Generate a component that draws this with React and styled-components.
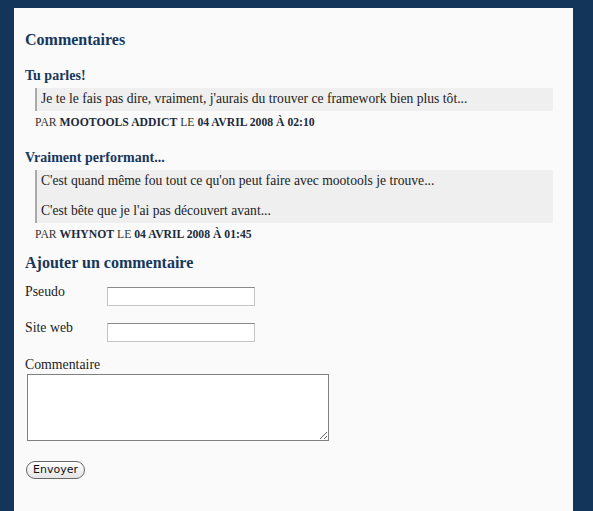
import React from "react";
import styled, { createGlobalStyle } from "styled-components";

const GlobalStyle = createGlobalStyle`
    html, body{
        margin: 0;
        padding: 0;
        background: #14355a;
        height: 100%;
    }
    #root{
        height: 100%;
    }
`;

const comments = [
    {
        title: "Tu parles!",
        paragraphs: ["Je te le fais pas dire, vraiment, j'aurais du trouver ce framework bien plus tôt..."],
        author: "Mootools addict",
        date: "04 avril 2008 à 02:10",
    },
    {
        title: "Vraiment performant...",
        paragraphs: [
            "C'est quand même fou tout ce qu'on peut faire avec mootools je trouve...",
            "C'est bête que je l'ai pas découvert avant...",
        ],
        author: "whynot",
        date: "04 avril 2008 à 01:45",
    },
];

function App(){
    return(
        <>
            <GlobalStyle />
            <Page>
                <Panel>
                    <Heading>Commentaires</Heading>
                    {comments.map((c) => (
                        <Comment key={c.title}>
                            <CommentTitle>{c.title}</CommentTitle>
                            <Quote>
                                {c.paragraphs.map((p) => <p key={p}>{p}</p>)}
                            </Quote>
                            <Meta>
                                par <strong>{c.author}</strong> le <strong>{c.date}</strong>
                            </Meta>
                        </Comment>
                    ))}
                    <FormHeading>Ajouter un commentaire</FormHeading>
                    <Form onSubmit={(e) => e.preventDefault()}>
                        <Field>
                            <FieldLabel>Pseudo</FieldLabel>
                            <TextInput type="text" />
                        </Field>
                        <Field>
                            <FieldLabel>Site web</FieldLabel>
                            <TextInput type="text" />
                        </Field>
                        <Block>
                            <Label>Commentaire</Label>
                            <TextArea />
                        </Block>
                        <Button type="submit">Envoyer</Button>
                    </Form>
                </Panel>
            </Page>
        </>
    )
}

const Page = styled.div`
    height: 100%;
    padding: 8px 20px 0 14px;
    box-sizing: border-box;
    overflow: hidden;
`;

const Panel = styled.div`
    width: 559px;
    min-height: 100%;
    box-sizing: border-box;
    background: #fafafa;
    padding: 22px 20px 30px 11px;
    font-family: "Liberation Serif", serif;
    font-size: 13.6px;
    color: #222;
`;

const Heading = styled.h2`
    margin: 0 0 18px 0;
    font-size: 16px;
    font-weight: bold;
    color: #17375c;
    line-height: 20px;
`;

const Comment = styled.div`
    margin-bottom: 19px;
`;

const CommentTitle = styled.h3`
    margin: 0 0 4px 0;
    font-size: 14px;
    font-weight: bold;
    color: #17375c;
    line-height: 16px;
`;

const Quote = styled.blockquote`
    margin: 0 0 0 10px;
    padding: 3px 6px 4px 4px;
    background: #efefef;
    border-left: 2px solid #aaa;
    p{
        margin: 0;
        line-height: 16px;
        & + p{
            margin-top: 14px;
        }
    }
`;

const Meta = styled.div`
    margin: 4px 0 0 10px;
    font-size: 11.7px;
    text-transform: uppercase;
    color: #333;
    line-height: 16px;
    strong{
        color: #1c2a3a;
    }
`;

const FormHeading = styled(Heading)`
    margin: -9px 0 14px 0;
`;

const Form = styled.form`
    display: flex;
    flex-direction: column;
    gap: 17px;
`;

const Field = styled.div`
    display: flex;
    align-items: flex-start;
    height: 19px;
`;

const Label = styled.label`
    width: 82px;
    line-height: 14px;
    flex-shrink: 0;
    font-size: 13.8px;
`;

const FieldLabel = styled(Label)`
    margin-top: -2px;
`;

const TextInput = styled.input`
    width: 148px;
    height: 19px;
    box-sizing: border-box;
    margin: 0;
    border: 1px solid #c4c4c4;
    border-top-color: #8a8a8a;
    background: #fff;
    padding: 1px 3px;
    font-family: "Liberation Sans", sans-serif;
    font-size: 12px;
`;

const Block = styled.div`
    display: flex;
    flex-direction: column;
    gap: 2px;
    margin-top: -1px;
`;

const TextArea = styled.textarea`
    width: 302px;
    height: 67px;
    box-sizing: border-box;
    margin: 0 0 0 2px;
    border: 1px solid #808080;
    background: #fff;
    font-family: "Liberation Sans", sans-serif;
    font-size: 12px;
    display: block;
`;

const Button = styled.button`
    align-self: flex-start;
    margin: 3px 0 0 1px;
    width: 59px;
    height: 18px;
    padding: 0;
    border: 1px solid #666;
    border-radius: 9px;
    background: linear-gradient(#ffffff, #f2f2f2 50%, #e4e4e4);
    font-family: "DejaVu Sans", sans-serif;
    font-size: 11px;
    color: #111;
    line-height: 16px;
`;

export default App
